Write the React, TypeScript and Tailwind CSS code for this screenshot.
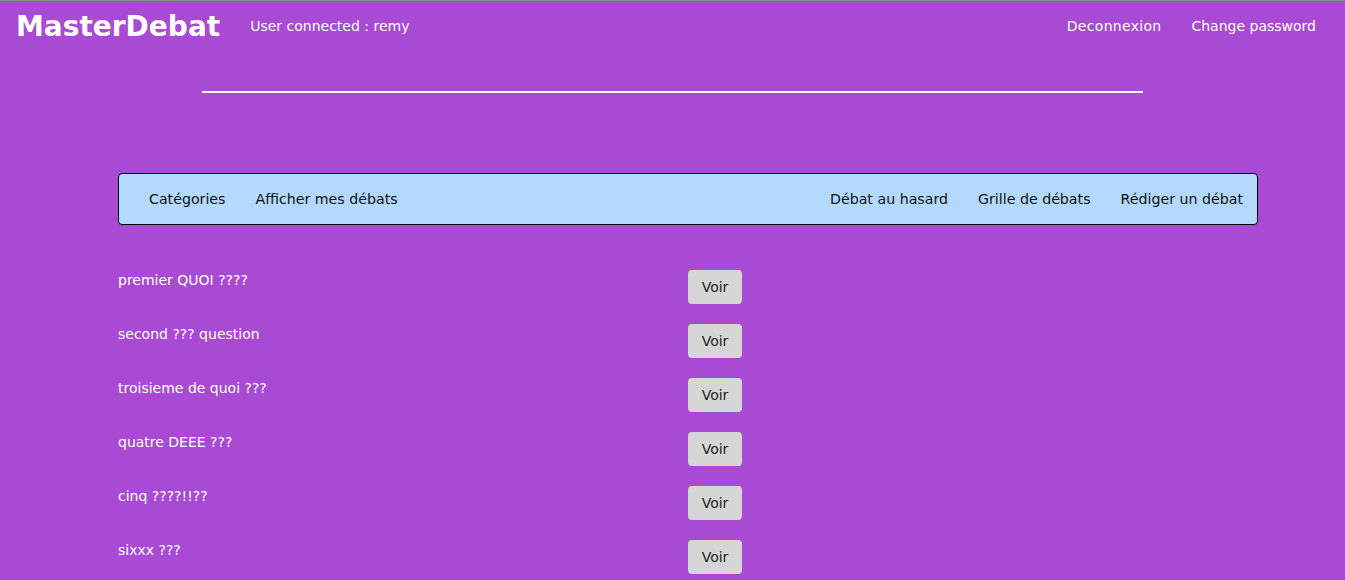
const debates = [
  "premier QUOI ????",
  "second ??? question",
  "troisieme de quoi ???",
  "quatre DEEE ???",
  "cinq ????!!??",
  "sixxx ???",
];

export default function App() {
  return (
    <main
      className="min-h-screen border-t border-[#8c8c8c] bg-[#a84ad4] text-white"
      style={{ fontFamily: '"DejaVu Sans", sans-serif' }}
    >
      <header className="flex h-[51px] items-center justify-between pl-4 pr-[29px]">
        <div className="flex items-center">
          <h1 className="text-[28px] leading-none font-bold">MasterDebat</h1>
          <span className="ml-[30px] text-[14px]">User connected : remy</span>
        </div>
        <nav className="flex gap-[30px] text-[14px]">
          <a className="tracking-[0.3px]">Deconnexion</a>
          <a>Change password</a>
        </nav>
      </header>

      <div className="mx-auto mt-[39px] h-[2px] w-[70%] bg-white" />

      <div className="ml-[118px] mt-[80px] flex h-[52px] w-[1140px] items-center justify-between rounded-[4px] border border-black bg-[#b3dafe] pt-px pl-[30px] pr-[14px] text-[14.2px] text-[#111]">
        <div className="flex gap-[30px]">
          <a>Catégories</a>
          <a>Afficher mes débats</a>
        </div>
        <div className="flex gap-[30px]">
          <a>Débat au hasard</a>
          <a>Grille de débats</a>
          <a>Rédiger un débat</a>
        </div>
      </div>

      <ul className="ml-[118px] mt-[45px] flex flex-col gap-[20px]">
        {debates.map((title) => (
          <li key={title} className="flex items-start">
            <span className="w-[570px] text-[14px]">{title}</span>
            <button
              type="button"
              className="h-[34px] w-[54px] rounded-[4px] bg-[#d6d6d6] text-[14px] text-[#1a1a1a]"
            >
              Voir
            </button>
          </li>
        ))}
      </ul>
    </main>
  );
}
